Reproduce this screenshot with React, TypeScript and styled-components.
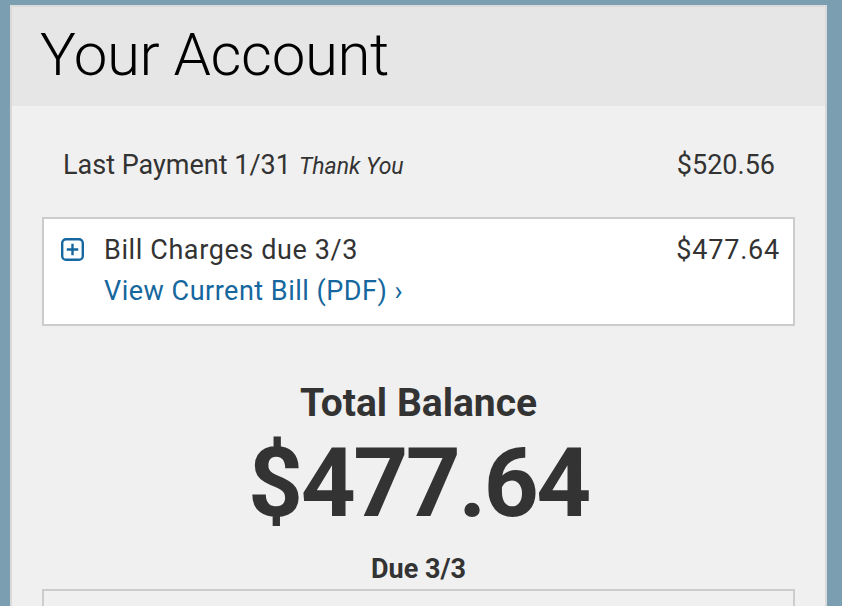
import React from "react";
import styled, { createGlobalStyle } from "styled-components";

const Global = createGlobalStyle`
  html, body { margin: 0; padding: 0; }
  body {
    background: #7b9eb1;
    font-family: Roboto, "Liberation Sans", sans-serif;
    color: #333;
    overflow: hidden;
  }
`;

const Page = styled.div`
  padding: 5px 15px 0 10px;
  height: 606px;
  box-sizing: border-box;
`;

const Card = styled.div`
  border: 2px solid #dadada;
  border-bottom: none;
  background: #f0f0f0;
  height: 100%;
  box-sizing: border-box;
`;

const Header = styled.div`
  background: #e6e6e6;
  height: 99px;
  display: flex;
  align-items: center;
  padding: 0 28px;
`;

const Title = styled.h1`
  margin: 0;
  font-size: 60px;
  font-weight: 300;
  color: #000;
  letter-spacing: -0.4px;
  line-height: 1;
  padding-bottom: 4px;
`;

const Body = styled.div`
  padding: 0 30px;
  display: flex;
  flex-direction: column;
`;

const PaymentRow = styled.div`
  display: flex;
  justify-content: space-between;
  align-items: baseline;
  padding: 43px 20px 0 21px;
  height: 111px;
  box-sizing: border-box;
  font-size: 27px;
  line-height: 32px;
`;

const Italic = styled.em`
  font-style: italic;
  font-size: 23px;
  margin-left: 8px;
`;

const BillBox = styled.div`
  border: 2px solid #cccccc;
  background: #fff;
  height: 109px;
  box-sizing: border-box;
  padding: 14px 13px 0 17px;
  display: flex;
  gap: 20px;
`;

const PlusIcon = styled.svg`
  flex: none;
  width: 23px;
  height: 23px;
  margin-top: 5px;
`;

const BillInfo = styled.div`
  flex: 1;
  display: flex;
  flex-direction: column;
`;

const BillLine = styled.div`
  display: flex;
  justify-content: space-between;
  font-size: 27px;
  line-height: 34px;
`;

const BillLabel = styled.span`
  letter-spacing: 0.6px;
`;

const BillAmount = styled.span`
  letter-spacing: 0.8px;
`;

const Link = styled.a`
  color: #15679e;
  font-size: 27px;
  line-height: 34px;
  letter-spacing: 0.5px;
  text-decoration: none;
  margin-top: 7px;
`;

const Totals = styled.div`
  display: flex;
  flex-direction: column;
  align-items: center;
  padding-top: 52px;
`;

const TotalLabel = styled.div`
  font-size: 39px;
  font-weight: 700;
  line-height: 51px;
`;

const BigAmount = styled.div`
  font-size: 96px;
  font-weight: 700;
  line-height: 108px;
  letter-spacing: -2.5px;
`;

const Due = styled.div`
  font-size: 27px;
  font-weight: 700;
  line-height: 30px;
  margin-top: 17px;
`;

const NextBox = styled.div`
  border: 2px solid #cccccc;
  border-bottom: none;
  height: 30px;
  margin-top: 5px;
`;

export default function App() {
  return (
    <>
      <Global />
      <Page>
        <Card>
          <Header>
            <Title>Your Account</Title>
          </Header>
          <Body>
            <PaymentRow>
              <span>
                Last Payment 1/31<Italic>Thank You</Italic>
              </span>
              <span>$520.56</span>
            </PaymentRow>
            <BillBox>
              <PlusIcon viewBox="0 0 24 24">
                <rect x="1.25" y="1.25" width="21.5" height="21.5" rx="4" fill="none" stroke="#15679e" strokeWidth="2.5" />
                <path d="M12 6v12M6 12h12" stroke="#15679e" strokeWidth="2.5" />
              </PlusIcon>
              <BillInfo>
                <BillLine>
                  <BillLabel>Bill Charges due 3/3</BillLabel>
                  <BillAmount>$477.64</BillAmount>
                </BillLine>
                <Link href="#">View Current Bill (PDF) ›</Link>
              </BillInfo>
            </BillBox>
            <Totals>
              <TotalLabel>Total Balance</TotalLabel>
              <BigAmount>$477.64</BigAmount>
              <Due>Due 3/3</Due>
            </Totals>
            <NextBox />
          </Body>
        </Card>
      </Page>
    </>
  );
}
